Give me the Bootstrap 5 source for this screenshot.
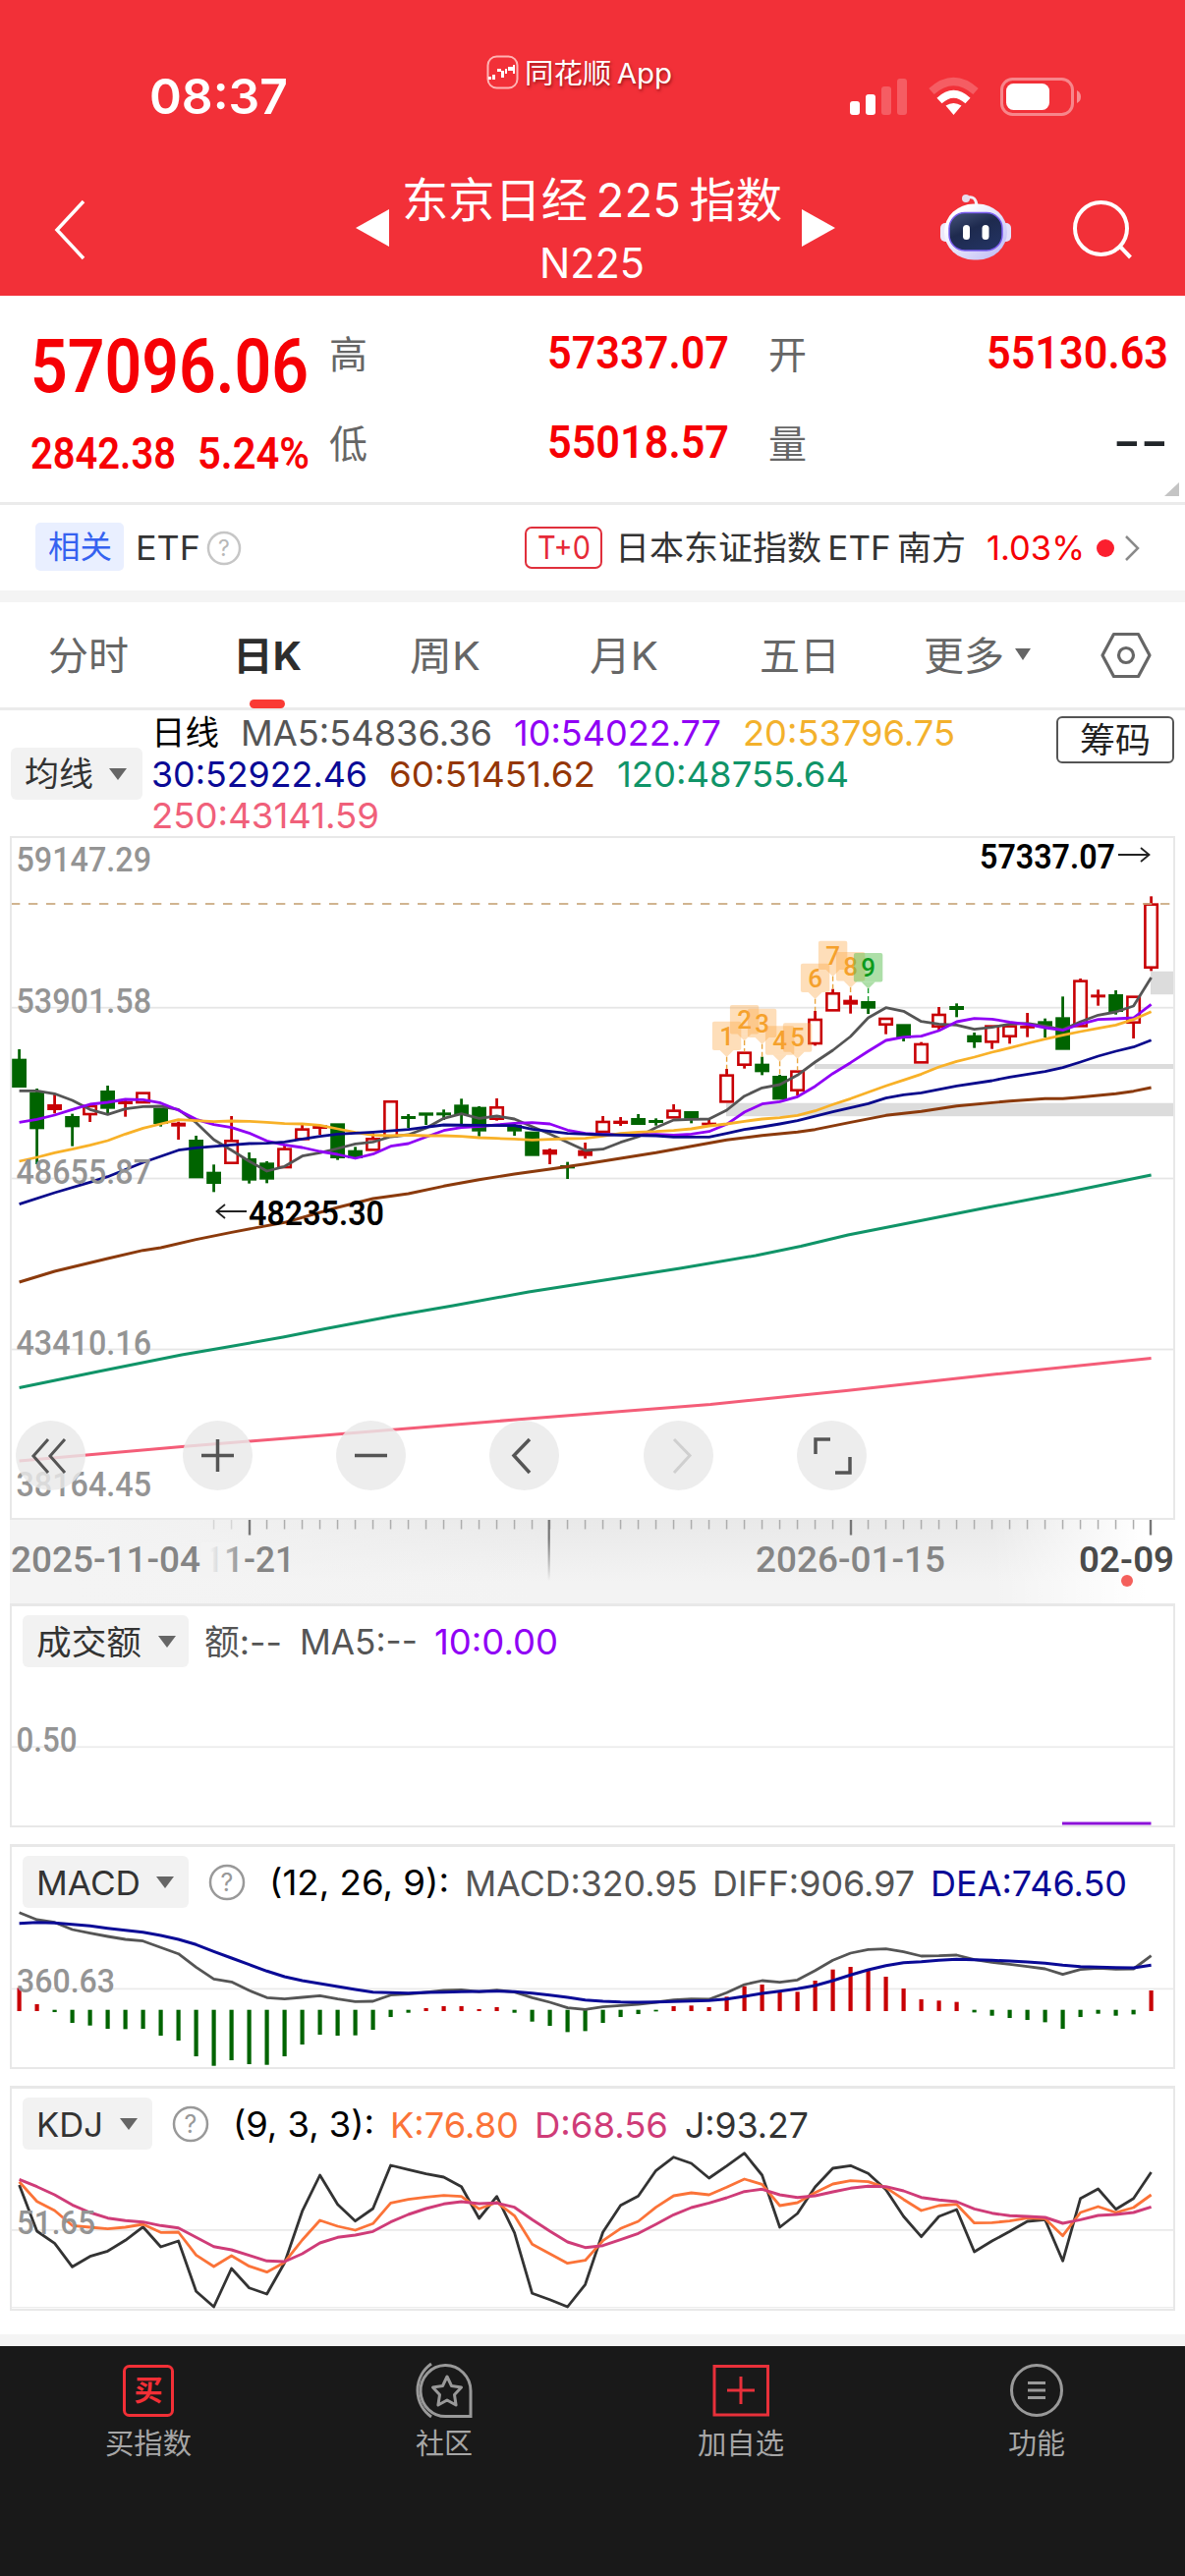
<!DOCTYPE html>
<html lang="zh-CN">
<head>
<meta charset="utf-8">
<meta name="viewport" content="width=device-width, initial-scale=1">
<title>东京日经225指数 N225</title>
<link href="https://cdn.jsdelivr.net/npm/bootstrap@5.3.0/dist/css/bootstrap.min.css" rel="stylesheet">
<style>
body{width:1206px;height:2622px;overflow:hidden;background:#fff;color:#333;font-family:Inter,"Noto Sans CJK SC",sans-serif;font-size:36px;line-height:1}
svg{display:block;flex:none}
.fit{display:inline-block;white-space:nowrap;transform-origin:0 50%;flex:none}
.din{font-family:Roboto,"Noto Sans CJK SC",sans-serif}
.app-head{background:#f23038;color:#fff;height:301px}
.status-row{height:140px;padding-top:54px}
.clock{font-size:49.5px;font-weight:600;margin-left:152px;margin-top:20px}
.source-tag{margin-left:202px;height:39px;font-size:28px;gap:6px;text-shadow:1px 2px 3px rgba(80,0,0,.55)}
.source-tag .fit{margin-top:2px}
.signals{margin-left:180px;margin-top:23px}
.nav-row{height:161px}
.back-ico{margin:63px 0 0 54px}
.tri-l{margin:73px 0 0 274px}
.title-box{width:388px;margin-left:12px;padding-top:38px}
.title-main{font-size:48px;line-height:52px}
.title-sub{font-size:42px;line-height:42px;margin-top:17px}
.tri-r{margin:73px 0 0 20px}
.bot-ico{margin:55px 0 0 104px}
.search-ico{margin:62px 0 0 59px}
.quote{height:213px;border-bottom:3px solid #ebebeb;padding-left:31px}
.up{color:#f60005}
.q-last{width:304px}
.q-price{font-size:75.5px;font-weight:600;line-height:60px;margin-top:42px}
.q-chg{font-size:44.5px;font-weight:600;line-height:40px;margin-top:39px}
.q-cell{height:91px;font-size:39px;color:#666}
.q-grid{padding-top:14px}
.q-num{font-size:47px;font-weight:600;margin-top:-4px}
.q-c1{width:407px}.q-c2{width:407px;margin-left:40px}
.corner{margin:-6px 6px 0 auto}
.etf-row{height:87px;padding-left:36px;font-size:34px}
.tag-rel{width:90px;height:49px;border-radius:5px;background:#e9efff;color:#3562f0;font-size:32px;margin-top:-2px}
.tag-t0{width:79px;height:43px;border:2px solid #e0303c;border-radius:7px;color:#e62a38;font-size:32px;margin-left:288px}
.gap-bar{height:12px;background:#f4f4f4}
.tabs-row{height:110px;border-bottom:3px solid #ebebeb;font-size:40px;color:#666;padding-left:49px}
.tabs-row .fit{margin-top:2px}
.tab-on{color:#2d2d2d;font-weight:700}
.tab-mark{width:36px;height:9px;border-radius:5px;background:#fa3a34;top:66px}
.ma-head{height:128px;padding:2px 11px 0 11px}
.pick{background:#f2f2f2;border-radius:6px;height:53px;font-size:34px;color:#333;padding-left:14px}
.ma-pick{width:134px;margin-top:36px}
.ma-line{height:42px;gap:22px;font-size:36px;font-weight:400}
.ma-list{margin-left:9px}
.chip-btn{width:120px;height:48px;border:2px solid #555;border-radius:6px;font-size:35px;color:#222;margin-left:auto;margin-top:4px}
.pane{margin-left:10px;width:1186px;border:2px solid #e8e8e8}
.pane-head{padding:9px 0 0 11px}
.pane-head .fit{margin-top:2px}
.axis-strip{margin-left:10px;height:85px}
.tool-row{left:4px;top:593px}
.tool{width:71px;height:71px;border-radius:50%;background:rgba(233,233,233,.82)}
.tool-row .tool:nth-child(1){margin-right:99px}
.tool-row .tool:not(:first-child){margin-right:85.2px}
.tab-foot{background:#191919;height:234px;padding-top:14px}
.foot-item{width:301.5px;font-size:29px;color:#a6a6a6}
.foot-item>.fit{margin-top:9px}
</style>
</head>
<body>
<header class="app-head">
  <div class="status-row d-flex align-items-start">
    <span class="fit clock" data-w="141">08:37</span>
    <div class="source-tag d-flex align-items-center">
      <svg width="33" height="35" viewBox="0 0 33 35"><rect x="1.5" y="1.5" width="30" height="32" rx="9" fill="none" stroke="#ffb4b4" stroke-width="2"/><g fill="#fff"><path d="M2 22h3v3H2zM6 20h3v5H6zM11 14h4v3h-4zM15 16h3v7h-3zM19 14h2v5h-2zM22 12h5v4h-5zM27 10h2v9h-2z"/></g></svg>
      <span class="fit" data-w="150">同花顺&thinsp;App</span>
    </div>
    <svg class="signals" width="238" height="42" viewBox="864 76 238 42">
      <g fill="#fff"><rect x="865" y="102" width="10" height="14" rx="3"/><rect x="881" y="95" width="10" height="21" rx="3"/><rect x="897" y="87" width="10" height="29" rx="3" opacity=".22"/><rect x="913" y="79" width="10" height="37" rx="3" opacity=".22"/></g>
      <g fill="none" stroke="#fff"><path d="M948 92Q970.500 72 993 92" stroke-width="8" opacity=".22"/><path d="M956 101.500Q970.500 88 985 101.500" stroke-width="7.500"/></g>
      <path d="M970.500 116l-8-9.500q8-5 16 0z" fill="#fff"/>
      <rect x="1019.500" y="79.500" width="72" height="36" rx="11" fill="none" stroke="#fff" stroke-opacity=".42" stroke-width="3"/>
      <rect x="1024" y="84" width="44" height="27" rx="7.500" fill="#fff"/><path d="M1096 91q4 2 4 6.500t-4 6.500z" fill="#fff" opacity=".45"/>
    </svg>
  </div>
  <nav class="nav-row d-flex align-items-start">
    <svg class="back-ico" width="34" height="62" viewBox="0 0 34 62"><path d="M31 2L4 31l27 29" fill="none" stroke="#fff" stroke-width="3.500"/></svg>
    <svg class="tri-l" width="34" height="38"><path d="M34 0v38L0 19z" fill="#fff"/></svg>
    <div class="title-box d-flex flex-column align-items-center">
      <span class="fit title-main" data-w="387">东京日经&thinsp;225&thinsp;指数</span>
      <span class="fit title-sub" data-w="107">N225</span>
    </div>
    <svg class="tri-r" width="34" height="38"><path d="M0 0v38l34-19z" fill="#fff"/></svg>
    <svg class="bot-ico" width="78" height="72" viewBox="954 196 78 72">
      <defs><linearGradient id="hd" x1="0" y1="0" x2="1" y2="1"><stop offset=".2" stop-color="#fff"/><stop offset="1" stop-color="#b9b6f5"/></linearGradient>
      <linearGradient id="fc" x1="0" y1="0" x2=".6" y2="1"><stop offset="0" stop-color="#46557a"/><stop offset=".5" stop-color="#1e2a4e"/><stop offset="1" stop-color="#223260"/></linearGradient></defs>
      <path d="M985 202q8-2 9 8" fill="none" stroke="#f2eef6" stroke-width="3"/><circle cx="983" cy="203" r="4" fill="#e6dcec"/>
      <rect x="957" y="228" width="12" height="19" rx="5" fill="#ece8fa"/><rect x="1017" y="228" width="12" height="19" rx="5" fill="#e3dffa"/>
      <rect x="961" y="208.500" width="64" height="57" rx="30" fill="url(#hd)"/>
      <rect x="966" y="217.500" width="54" height="38.500" rx="16" fill="url(#fc)" stroke="#7a5cf0" stroke-width="1.500"/>
      <rect x="980" y="230" width="7" height="15" rx="3.500" fill="#fff"/><rect x="999.500" y="230" width="7" height="15" rx="3.500" fill="#fff"/>
    </svg>
    <svg class="search-ico" width="62" height="62" viewBox="1091 202 62 62"><circle cx="1120.500" cy="232.500" r="26.500" fill="none" stroke="#fff" stroke-width="4"/><path d="M1140 251l10.500 11" stroke="#fff" stroke-width="4"/></svg>
  </nav>
</header>

<section class="quote">
  <div class="d-flex align-items-start">
    <div class="q-last din up d-flex flex-column align-items-start">
      <span class="fit q-price" data-w="283">57096.06</span>
      <div class="d-flex q-chg"><span class="fit" data-w="148">2842.38</span><span class="fit" data-w="114" style="margin-left:22px">5.24%</span></div>
    </div>
    <div class="q-grid q-c1">
      <div class="q-cell d-flex align-items-center justify-content-between"><span>高</span><span class="fit din q-num up" data-w="185">57337.07</span></div>
      <div class="q-cell d-flex align-items-center justify-content-between"><span>低</span><span class="fit din q-num up" data-w="185">55018.57</span></div>
    </div>
    <div class="q-grid q-c2">
      <div class="q-cell d-flex align-items-center justify-content-between"><span>开</span><span class="fit din q-num up" data-w="185">55130.63</span></div>
      <div class="q-cell d-flex align-items-center justify-content-between"><span>量</span><span class="fit din q-num text-dark" data-w="56">--</span></div>
    </div>
  </div>
  <svg class="corner" width="15" height="14"><path d="M15 0v14H0z" fill="#c4c4c4"/></svg>
</section>

<section class="etf-row d-flex align-items-center">
  <span class="tag-rel d-flex align-items-center justify-content-center"><span class="fit" data-w="65">相关</span></span>
  <span class="fit" data-w="66" style="margin-left:12px">ETF</span>
  <svg width="36" height="36" viewBox="0 0 36 36" style="margin-left:6px"><circle cx="18" cy="18" r="16" fill="none" stroke="#c6c6c6" stroke-width="2.500"/><text x="18" y="26" font-size="23" fill="#b8b8b8" text-anchor="middle">?</text></svg>
  <span class="tag-t0 d-flex align-items-center justify-content-center"><span class="fit" data-w="54">T+0</span></span>
  <span class="fit" data-w="357" style="margin-left:13px">日本东证指数&thinsp;ETF&thinsp;南方</span>
  <span class="fit up" data-w="100" style="margin-left:21px">1.03%</span>
  <svg width="50" height="30" viewBox="1112 541 50 30" style="margin-left:8px"><circle cx="1125" cy="556" r="9" fill="#fb1f2e"/><path d="M1146 544l12 12-12 12" fill="none" stroke="#8a8a8a" stroke-width="2.500"/></svg>
</section>
<div class="gap-bar"></div>

<nav class="tabs-row d-flex align-items-center">
  <span class="fit" data-w="82">分时</span>
  <span class="position-relative tab-on" style="margin-left:106px"><span class="fit" data-w="70">日K</span><i class="tab-mark position-absolute" style="left:17px"></i></span>
  <span class="fit" data-w="72" style="margin-left:110px">周K</span>
  <span class="fit" data-w="70" style="margin-left:111px">月K</span>
  <span class="fit" data-w="82" style="margin-left:103px">五日</span>
  <span class="fit" data-w="82" style="margin-left:85px">更多</span>
  <svg width="18" height="14" style="margin-left:10px"><path d="M1 0h16L9 12z" fill="#666"/></svg>
  <svg width="52" height="48" viewBox="1120 643 52 48" style="margin-left:70px"><path d="M1122 667l11.500-21.500h25L1170 667l-11.500 21.500h-25z" fill="none" stroke="#666" stroke-width="3.200" stroke-linejoin="round"/><circle cx="1146" cy="667" r="7.500" fill="none" stroke="#666" stroke-width="3.200"/></svg>
</nav>

<section class="ma-head d-flex align-items-start">
  <span class="pick ma-pick d-flex align-items-center"><span class="fit" data-w="70">均线</span><svg class="ms-3" width="18" height="12"><path d="M0 0h18L9 12z" fill="#666"/></svg></span>
  <div class="ma-list">
    <div class="ma-line d-flex align-items-center"><span class="fit" data-w="69" style="color:#000;font-size:34px">日线</span><span class="fit" data-w="256" style="color:#555">MA5:54836.36</span><span class="fit" data-w="211" style="color:#9000f5">10:54022.77</span><span class="fit" data-w="216" style="color:#f3b12c">20:53796.75</span></div>
    <div class="ma-line d-flex align-items-center"><span class="fit" data-w="220" style="color:#0a0a96">30:52922.46</span><span class="fit" data-w="210" style="color:#943606">60:51451.62</span><span class="fit" data-w="236" style="color:#109468">120:48755.64</span></div>
    <div class="ma-line d-flex align-items-center"><span class="fit" data-w="232" style="color:#f0607a">250:43141.59</span></div>
  </div>
  <span class="chip-btn d-flex align-items-center justify-content-center"><span class="fit" data-w="72">筹码</span></span>
</section>

<section class="pane position-relative">
  <svg id="kline" class="din" width="1182" height="692" viewBox="12 853 1182 692"></svg>
  <div class="tool-row position-absolute d-flex">
    <span class="tool"><svg width="71" height="71"><path d="M33 19L18 36l15 17M50 19L35 36l15 17" fill="none" stroke="#555" stroke-width="3"/></svg></span>
    <span class="tool"><svg width="71" height="71"><path d="M35.500 19v33M19 35.500h33" stroke="#555" stroke-width="3.500"/></svg></span>
    <span class="tool"><svg width="71" height="71"><path d="M19 35.500h33" stroke="#555" stroke-width="3.500"/></svg></span>
    <span class="tool"><svg width="71" height="71"><path d="M41 19L25 35.500 41 53" fill="none" stroke="#555" stroke-width="3.500"/></svg></span>
    <span class="tool"><svg width="71" height="71"><path d="M31 19l16 16.500L31 53" fill="none" stroke="#cfcfcf" stroke-width="3"/></svg></span>
    <span class="tool"><svg width="71" height="71"><path d="M34 19H19v15M39 53h15V37" fill="none" stroke="#555" stroke-width="3.500"/></svg></span>
  </div>
</section>
<svg id="axis" class="axis-strip din" width="1196" height="85" viewBox="10 1547 1196 85"></svg>

<section class="pane" style="border-top-width:3px">
  <div class="pane-head d-flex align-items-center">
    <span class="pick d-flex align-items-center" style="width:169px"><span class="fit" data-w="107">成交额</span><svg width="18" height="12" style="margin-left:17px"><path d="M0 0h18L9 12z" fill="#666"/></svg></span>
    <span class="fit" data-w="79" style="color:#555;margin-left:16px;font-size:35px">额:--</span>
    <span class="fit" data-w="120" style="color:#555;margin-left:18px;font-size:35px">MA5:--</span>
    <span class="fit" data-w="126" style="color:#9000f5;margin-left:17px;font-size:35px">10:0.00</span>
  </div>
  <svg id="vol" class="din" width="1182" height="161" viewBox="12 1697 1182 161"></svg>
</section>

<section class="pane" style="border-top-width:3px;margin-top:17px">
  <div class="pane-head d-flex align-items-center">
    <span class="pick d-flex align-items-center" style="width:169px"><span class="fit" data-w="106">MACD</span><svg width="18" height="12" style="margin-left:16px"><path d="M0 0h18L9 12z" fill="#666"/></svg></span>
    <svg width="38" height="38" style="margin-left:20px"><circle cx="19" cy="19" r="17" fill="none" stroke="#999" stroke-width="2.500"/><text x="19" y="28" font-size="25" fill="#999" text-anchor="middle">?</text></svg>
    <span class="fit" data-w="183" style="color:#000;margin-left:24px;font-size:35px">(12, 26, 9):</span>
    <span class="fit" data-w="237" style="color:#555;margin-left:16px">MACD:320.95</span>
    <span class="fit" data-w="206" style="color:#555;margin-left:15px">DIFF:906.97</span>
    <span class="fit" data-w="200" style="color:#0a0a96;margin-left:16px">DEA:746.50</span>
  </div>
  <svg id="macd" class="din" width="1182" height="162" viewBox="12 1942 1182 162"></svg>
</section>

<section class="pane" style="border-top-width:3px;margin-top:17px">
  <div class="pane-head d-flex align-items-center">
    <span class="pick d-flex align-items-center" style="width:132px"><span class="fit" data-w="68">KDJ</span><svg width="18" height="12" style="margin-left:17px"><path d="M0 0h18L9 12z" fill="#666"/></svg></span>
    <svg width="38" height="38" style="margin-left:20px"><circle cx="19" cy="19" r="17" fill="none" stroke="#999" stroke-width="2.500"/><text x="19" y="28" font-size="25" fill="#999" text-anchor="middle">?</text></svg>
    <span class="fit" data-w="144" style="color:#000;margin-left:24px;font-size:35px">(9, 3, 3):</span>
    <span class="fit" data-w="131" style="color:#fb7338;margin-left:16px">K:76.80</span>
    <span class="fit" data-w="136" style="color:#cf3c78;margin-left:16px">D:68.56</span>
    <span class="fit" data-w="126" style="color:#333;margin-left:17px">J:93.27</span>
  </div>
  <svg id="kdj" class="din" width="1182" height="162" viewBox="12 2188 1182 162"></svg>
</section>

<div class="gap-bar" style="margin-top:24px"></div>
<footer class="tab-foot d-flex">
  <div class="foot-item d-flex flex-column align-items-center">
    <svg width="64" height="62" viewBox="0 0 64 62"><rect x="7.500" y="6.500" width="49" height="50" rx="5" fill="none" stroke="#f22f36" stroke-width="3"/><text x="32" y="42" font-size="29" font-weight="700" fill="#f22f36" text-anchor="middle">买</text></svg>
    <span class="fit" data-w="88">买指数</span>
  </div>
  <div class="foot-item d-flex flex-column align-items-center">
    <svg width="64" height="62" viewBox="423 2402 64 62"><g fill="none" stroke="#999" stroke-width="3"><path d="M458 2459.500a25.500 26 0 1 1 24-26v26z"/><path d="M442 2406a33 33 0 0 0 0 54"/><path d="M458 2419l4.500 9.500 10 1.500-7 7.500 1.600 10.500-9.100-5-9.100 5 1.600-10.500-7-7.500 10-1.500z" stroke-linejoin="round"/></g></svg>
    <span class="fit" data-w="58">社区</span>
  </div>
  <div class="foot-item d-flex flex-column align-items-center">
    <svg width="64" height="62" viewBox="722 2402 64 62"><path d="M727 2408.500h54.500v49.500H727zM754 2419v28M740 2433h28" fill="none" stroke="#e8303a" stroke-width="3"/></svg>
    <span class="fit" data-w="88">加自选</span>
  </div>
  <div class="foot-item d-flex flex-column align-items-center">
    <svg width="64" height="62" viewBox="1024 2402 64 62"><circle cx="1056" cy="2433" r="25.500" fill="none" stroke="#999" stroke-width="3"/><path d="M1047 2425.500h18M1047 2433h18M1047 2440.500h18" stroke="#999" stroke-width="2.800"/></svg>
    <span class="fit" data-w="58">功能</span>
  </div>
</footer>

<script src="https://cdn.jsdelivr.net/npm/bootstrap@5.3.0/dist/js/bootstrap.bundle.min.js"></script>
<script>
// Condense or widen each label to its column width.
document.querySelectorAll('[data-w]').forEach(e=>{
  const n=e.getBoundingClientRect().width,w=+e.dataset.w;
  e.style.width=w+'px';
  e.innerHTML='<span class="fit m-0" style="transform:scaleX('+(w/n).toFixed(4)+')">'+e.innerHTML+'</span>';
});
const X=i=>19.6+18*i;
const rect=(x,y,w,h,c,o='')=>`<rect x="${x}" y="${y}" width="${w}" height="${h}" fill="${c}" ${o}/>`;
const label=(x,y,t,w,c='#949494',wt=500,fs=35)=>`<text x="${x}" y="${y}" font-size="${fs}" font-weight="${wt}" fill="${c}" textLength="${w}" lengthAdjust="spacingAndGlyphs">${t}</text>`;
const poly=(p,c,w=2.8)=>`<polyline points="${p}" fill="none" stroke="${c}" stroke-width="${w}" stroke-linejoin="round"/>`;
// Series values are stored in thirds of a pixel below the pane origin.
const full=(a,b)=>a.map((v,i)=>X(i)+','+(b+v/3).toFixed(1)).join(' ');
const sparse=(a,b)=>{let s=[];for(let i=0;i<a.length;i+=2)s.push(X(a[i])+','+(b+a[i+1]/3).toFixed(1));return s.join(' ')};

const candles=[['g',683,771,654,771],['g',785,898,774,1005],['r',822,840,790,850],['g',858,892,851,950],['r',824,856,824,876],['g',780,836,765,852],['r',812,822,805,860],['r',784,820,784,820],['g',833,882,833,890],['r',878,890,875,930],['g',930,1048,918,1048],['g',1028,1065,1006,1090],['r',930,1005,858,1005],['g',987,1055,969,1064],['g',1000,1052,996,1063],['r',955,1018,945,1018],['r',895,932,885,932],['r',886,897,886,915],['g',880,987,880,992],['g',962,987,952,987],['r',924,965,910,965],['r',810,923,810,923],['g',858,867,852,895],['g',847,857,847,885],['g',847,856,838,870],['g',823,855,805,885],['g',830,905,828,920],['r',828,870,804,872],['g',885,905,880,918],['g',905,980,905,980],['r',960,976,957,1005],['g',1008,1018,998,1050],['r',962,980,939,988],['r',872,910,858,910],['r',872,882,861,888],['g',864,885,852,885],['g',870,879,865,887],['r',838,866,822,866],['g',843,866,843,880],['r',878,886,870,886],['r',730,818,714,818],['r',661,705,661,713],['g',698,724,677,733],['g',735,808,732,808],['r',718,783,718,795],['r',560,640,537,643],['r',480,539,470,539],['r',503,518,490,545],['g',507,530,507,546],['r',557,582,557,608],['g',577,620,577,630],['r',635,698,632,698],['r',545,588,525,595],['g',522,534,514,556],['g',611,633,603,650],['r',580,635,580,653],['r',580,618,580,637],['r',582,590,543,617],['g',568,584,560,618],['g',556,656,493,656],['r',442,587,438,587],['r',487,496,472,521],['g',486,540,474,548],['r',490,576,490,621],['r',208,408,187,415]];
const ma5=[781,781,790,810,838,853,836,829,828,838,878,930,962,996,1026,1012,980,970,957,943,937,921,915,895,865,851,865,858,867,890,913,938,963,959,938,921,893,870,868,867,840,797,772,762,733,693,657,615,558,527,538,569,577,580,593,587,577,575,583,594,570,550,540,522,435];
const ma10=[877,868,855,838,822,816,807,808,818,840,868,884,893,910,934,946,954,966,975,987,974,950,942,922,902,893,890,885,880,878,882,901,911,914,914,914,914,916,913,905,883,846,821,814,799,767,728,695,660,627,617,614,597,570,560,562,571,578,588,596,577,563,561,558,517];
const ma20=[996,984,970,959,947,933,913,895,882,869,872,875,873,874,877,881,882,886,897,908,916,918,916,918,918,920,924,926,928,931,929,927,926,919,911,907,905,902,897,888,882,874,867,863,856,842,823,805,785,766,748,730,708,691,678,663,650,636,623,611,600,590,580,563,539];
const ma30=[0,1127,2,1092,4,1060,5,1043,7,1000,9,962,10,955,12,946,13,942,14,941,15,937,16,928,17,920,18,913,20,907,22,899,24,885,26,886,28,887,29,898,31,911,33,915,36,918,37,922,39,922,40,911,41,899,42,891,43,882,44,872,46,845,48,820,49,803,50,793,51,787,53,766,55,750,56,739,58,722,59,710,60,693,61,675,62,660,63,647,64,626];
const ma60=[0,1365,2,1332,5,1293,7,1268,8,1260,10,1235,12,1213,15,1183,18,1137,20,1110,22,1095,24,1072,26,1052,28,1035,30,1020,32,1004,34,987,36,970,38,950,40,931,42,917,44,907,45,899,47,877,49,856,51,844,53,827,56,812,58,805,59,805,60,800,62,790,63,782,64,771];

let s='';
[1025.7,1199.5,1373.5].forEach(y=>s+=rect(12,y-.9,1182,1.8,'#e6e6e6'));
s+=rect(739,1122.7,455,13.5,'#dcdcdc')+rect(829,1083,365,5,'#dcdcdc')+rect(1171,988.7,23,23.5,'#dcdcdc');
candles.forEach(([c,t,b,h,l],i)=>{
  const k=c=='g'?'#006400':'#c80005',x=X(i),T=850+t/3,B=850+b/3,H=850+h/3,L=850+l/3;
  if(H<T)s+=rect(x-1.4,H,2.8,T-H+.5,k);
  if(L>B)s+=rect(x-1.4,B-.5,2.8,L-B+.5,k);
  if(c=='r'&&B-T>7)s+=rect(x-6.2,T+1.3,12.4,B-T-2.6,'#fff',`stroke="${k}" stroke-width="2.6"`);
  else s+=rect(x-7.4,T,14.8,Math.max(B-T,2.8),k);
});
s+=`<path d="M11 920H1192" stroke="#c9a77c" stroke-opacity=".85" stroke-width="1.900" stroke-dasharray="9.300 8.700"/>`;
s+=poly(full(ma5,850),'#555')+poly(full(ma10,850),'#9000f5')+poly(full(ma20,850),'#f8b128')+poly(sparse(ma30,850),'#0a0a8c')+poly(sparse(ma60,850),'#8b3a0c',2.9);
s+=poly('19.6,1412.500 100,1396 185,1379 223,1372.500 288,1361 331,1352.500 400,1339.500 461,1329 538,1315 615,1303 692,1291 769,1278 815,1268.500 863,1257 919,1246 1000,1230 1081,1214.500 1171.600,1196','#109468',3);
s+=poly('19.6,1487 185,1472.500 323,1461.500 531,1444.500 723,1429.500 861,1415.500 1015,1398.500 1171.600,1382.500','#f45d78',3);
[[40,569,1,714],[41,519,2,661],[42,530,3,677],[43,583,4,732],[44,574,5,718],[45,392,6,537],[46,323,7,470],[47,357,8,490],[48,360,9,507]].forEach(([i,t,n,e])=>{
  const x=X(i),y=850+t/3,g=n==9,c=g?'#5cc052':'#fba43c';
  s+=`<g fill="${c}" fill-opacity="${g?.5:.36}"><rect x="${x-14.7}" y="${y}" width="29.400" height="29.400" rx="2"/><path d="M${x-7} ${y+29.4}h14l-7 7z"/></g><path d="M${x} ${y+36}V${850+e/3}" stroke="${g?'#149a28':'#e9a640'}" stroke-width="1.400" stroke-dasharray="5 3"/><text x="${x}" y="${y+24}" font-size="26" text-anchor="middle" font-weight="500" fill="${g?'#0d9a1c':'#f5a12c'}">${n}</text>`;
});
[[887,'59147.29'],[1031,'53901.58'],[1204.500,'48655.87'],[1378.500,'43410.16'],[1523,'38164.45']].forEach(([y,t])=>s+=label(16.5,y,t,137.5));
s+=label(253,1246.5,'48235.30',138,'#000',600)+label(997,883.5,'57337.07',138,'#000',600);
s+='<path d="M251 1233H220M229 1226l-8.500 7 8.500 7M1138 870h31M1161 863l8.500 7-8.500 7" fill="none" stroke="#222" stroke-width="1.800"/>';
kline.innerHTML=s;

s='<defs><linearGradient id="tg" x1="0" y1="0" x2="0" y2="1"><stop offset="0" stop-color="#e9e9e9"/><stop offset=".75" stop-color="#f3f3f3"/></linearGradient><linearGradient id="lf" x1="0" x2="1"><stop offset=".1" stop-color="#f4f4f4"/><stop offset="1" stop-color="#f4f4f4" stop-opacity="0"/></linearGradient><linearGradient id="rf" x1="0" x2="1"><stop offset="0" stop-color="#fff" stop-opacity="0"/><stop offset=".8" stop-color="#fff"/></linearGradient><linearGradient id="cf" x1="0" y1="0" x2="0" y2="1"><stop offset=".3" stop-color="#777"/><stop offset="1" stop-color="#777" stop-opacity="0"/></linearGradient><linearGradient id="pf" x1="0" x2="1"><stop offset=".2" stop-color="#f3f3f3"/><stop offset="1" stop-color="#f3f3f3" stop-opacity="0"/></linearGradient></defs>';
s+=rect(10,1547,1196,85,'url(#tg)')+rect(10,1547,550,85,'url(#lf)')+rect(1010,1547,196,85,'url(#rf)');
for(let i=11;i<65;i++){const big=[13,47,64].includes(i);s+=rect(X(i)-.8+(i==64?-1:0),1547,big?2.4:1.5,big?15.5:9.5,big?'#777':'#adadad',i<13?'opacity=".4"':'')}
s+=rect(557.6,1547,2.2,62,'url(#cf)');
s+=label(208,1600,'11-21',92,'#858585',500,36)+rect(205,1570,44,36,'url(#pf)')+label(11,1600,'2025-11-04',193,'#858585',500,36)+label(769,1600,'2026-01-15',193,'#858585',500,36)+label(1098,1600,'02-09',97,'#4a4a4a',600,36);
s+='<circle cx="1147" cy="1609" r="6" fill="#f4605c"/>';
axis.innerHTML=s;

vol.innerHTML=rect(12,1777.3,1182,1.8,'#ededed')+label(16.5,1783,'0.50',62)+rect(1081,1854.5,90.500,3,'#8c12d8');

const hist=[460,510,534,567,575,585,586,585,606,621,669,698,681,693,695,669,633,603,606,605,588,549,536,522,516,516,525,519,536,563,576,595,592,567,549,540,532,516,514,519,487,455,450,472,472,438,404,396,407,426,462,495,499,503,535,545,552,558,565,585,549,539,545,541,468];
const diff=[230,252,260,282,293,303,312,317,337,356,397,433,442,468,490,494,489,484,494,502,501,482,479,474,468,466,472,467,473,490,504,521,526,518,514,510,504,497,494,495,475,450,438,443,436,407,376,354,343,341,350,363,362,360,374,382,388,395,402,419,404,400,403,402,362];
const dea=[263,260,262,266,271,278,284,290,300,312,328,349,369,389,409,426,438,447,456,465,473,475,476,474,473,472,471,470,472,476,482,489,497,501,503,504,503,502,500,499,494,486,477,470,463,453,438,421,405,392,383,380,376,373,374,376,378,381,385,391,395,397,398,399,391];
s=rect(12,2023.6,1182,1.6,'#e9e9e9');
hist.forEach((v,i)=>s+=v<530?rect(X(i)-2.1,1870+v/3,4.2,(531-v)/3,'#c80005'):rect(X(i)-2.1,2045.7,4.2,(v-527)/3,'#006400'));
s+=poly(full(diff,1870),'#555')+poly(full(dea,1870),'#0a0a96',3)+label(17,2028,'360.63',100,'#949494',500,33.5);
macd.innerHTML=s;

const K=[1052,1112,1140,1186,1191,1196,1191,1182,1207,1206,1276,1311,1278,1310,1328,1298,1230,1170,1188,1200,1180,1117,1106,1099,1094,1097,1135,1115,1156,1243,1272,1301,1292,1232,1195,1173,1130,1095,1086,1092,1069,1044,1060,1125,1116,1085,1059,1049,1052,1070,1106,1140,1125,1121,1178,1177,1172,1163,1165,1217,1146,1128,1146,1131,1092];
const D=[1045,1067,1092,1123,1146,1163,1171,1175,1186,1193,1222,1250,1260,1277,1294,1296,1272,1239,1222,1215,1204,1175,1152,1134,1120,1113,1119,1117,1130,1168,1203,1236,1253,1247,1229,1210,1182,1153,1131,1117,1101,1082,1075,1092,1100,1095,1083,1072,1066,1067,1080,1100,1108,1113,1135,1148,1156,1158,1161,1179,1168,1155,1152,1146,1129];
const J=[1062,1203,1240,1312,1280,1264,1231,1190,1251,1233,1387,1434,1317,1376,1395,1300,1142,1032,1121,1172,1134,1002,1015,1028,1038,1067,1164,1097,1208,1393,1412,1434,1366,1206,1124,1096,1018,977,996,1041,1004,965,1032,1191,1149,1068,1011,1003,1027,1076,1158,1220,1158,1137,1266,1233,1204,1173,1168,1294,1103,1074,1136,1103,1023];
kdj.innerHTML=rect(12,2269,1182,1.7,'#e9e9e9')+rect(12,2348,1182,1.2,'#ececec')+poly(full(J,1870),'#333')+poly(full(K,1870),'#fb7338')+poly(full(D,1870),'#cf3c78',2.9)+label(17,2274,'51.65',80,'#949494',500,33.5);
</script>
</body>
</html>
